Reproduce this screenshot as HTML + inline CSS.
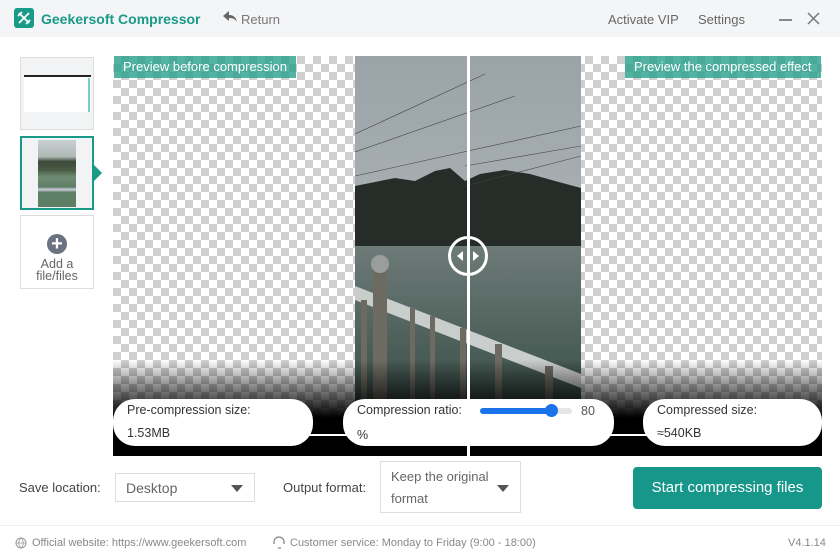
<!DOCTYPE html>
<html><head><meta charset="utf-8"><style>
*{margin:0;padding:0;box-sizing:border-box}
body{width:840px;height:560px;position:relative;background:#fff;font-family:"Liberation Sans",sans-serif;overflow:hidden;color:#333}
.abs{position:absolute}
.hdr{left:0;top:0;width:840px;height:37px;background:#f4f5f7}
.chk{background-color:#fff;background-image:linear-gradient(45deg,#cfcfcf 25%,transparent 25%,transparent 75%,#cfcfcf 75%),linear-gradient(45deg,#cfcfcf 25%,transparent 25%,transparent 75%,#cfcfcf 75%);background-size:16px 16px;background-position:0 0,8px 8px}
.lbl{background:rgba(40,160,140,.8);color:#fff;font-size:13px;height:22px;line-height:22px;padding:0 9px}
.pill{background:#fff;border-radius:22px;height:47px;top:399px;font-size:12.5px;color:#333}
.sel{border:1px solid #ddd;background:#fff;font-size:14px;color:#666}
.tri{width:0;height:0;border-left:6px solid transparent;border-right:6px solid transparent;border-top:7px solid #555}
</style></head><body>
<div class="abs hdr"></div>
<div class="abs" style="left:14px;top:8px;width:20px;height:20px;background:#1a9a88;border-radius:3px">
<svg width="20" height="20" viewBox="0 0 20 20"><path d="M5 5L15 15M15 5L5 15M8 4L4 8M16 12L12 16" stroke="#fff" stroke-width="1.8" fill="none"/></svg></div>
<div class="abs" style="left:41px;top:11px;font-size:14px;font-weight:bold;color:#1a9a88">Geekersoft Compressor</div>
<svg class="abs" style="left:223px;top:11px" width="14" height="12" viewBox="0 0 14 12"><path d="M6 0L0 5L6 10V7C10 7 12 8 14 11C13 6 10 4 6 4Z" fill="#666"/></svg>
<div class="abs" style="left:241px;top:12px;font-size:13px;color:#777">Return</div>
<div class="abs" style="left:608px;top:12px;font-size:13px;color:#666">Activate VIP</div>
<div class="abs" style="left:698px;top:12px;font-size:13px;color:#666">Settings</div>
<div class="abs" style="left:779px;top:19px;width:13px;height:1.5px;background:#888"></div>
<svg class="abs" style="left:807px;top:12px" width="13" height="13"><path d="M1 1L12 12M12 1L1 12" stroke="#777" stroke-width="1.5"/></svg>

<div class="abs" style="left:20px;top:57px;width:74px;height:73px;border:1px solid #ddd;background:#f2f3f5">
<div class="abs" style="left:3px;top:17px;width:67px;height:37px;background:#fff;border-top:2px solid #222"></div>
<div class="abs" style="left:67px;top:20px;width:2px;height:34px;background:#7cc"></div></div>
<div class="abs" style="left:20px;top:136px;width:74px;height:74px;border:2px solid #1a9a88;background:#f2f3f5">
<div class="abs" style="left:16px;top:2px;width:38px;height:67px;background:linear-gradient(#c8d0d4 0%,#b0b8b4 25%,#3d4a3c 32%,#4a5c45 45%,#6f8d74 55%,#5d7f66 70%,#ccd 74%,#5d7f66 78%)"></div></div>
<div class="abs" style="left:94px;top:165px;width:0;height:0;border-top:8px solid transparent;border-bottom:8px solid transparent;border-left:8px solid #1a9a88"></div>
<div class="abs" style="left:20px;top:215px;width:74px;height:74px;border:1px solid #ddd;background:#fff;text-align:center;font-size:12.5px;color:#666;line-height:12px">
<div style="width:20px;height:20px;border-radius:50%;background:#6b7280;margin:18px auto 4px;color:#fff;font-size:20px;line-height:20px;font-weight:bold">+</div>Add a<br>file/files</div>

<div class="abs chk" style="left:113px;top:56px;width:709px;height:400px"></div>
<svg class="abs" style="left:355px;top:56px" width="226" height="345" viewBox="0 0 226 345">
<defs><linearGradient id="sky" x1="0" y1="0" x2="0" y2="1"><stop offset="0" stop-color="#9aa3a8"/><stop offset="1" stop-color="#b9bfc0"/></linearGradient>
<linearGradient id="w" x1="0" y1="0" x2="0" y2="1"><stop offset="0" stop-color="#6d7b78"/><stop offset="1" stop-color="#3b4f48"/></linearGradient></defs>
<rect width="226" height="345" fill="url(#sky)"/>
<path d="M0 130L40 122L60 125L80 115L95 112L110 125L125 118L150 114L175 118L200 125L226 132V195H0Z" fill="#262d28"/>
<rect y="190" width="226" height="155" fill="url(#w)"/>
<path d="M0 78L130 18M0 96L160 40M0 120L226 70M110 110L226 90M110 130L226 100" stroke="#444" stroke-width=".6"/>
<path d="M0 230L226 318V332L0 244Z" fill="#c9cdcc"/>
<g fill="#6d6a62"><rect x="6" y="244" width="6" height="110"/><rect x="18" y="212" width="14" height="140"/><rect x="55" y="252" width="5" height="100"/><rect x="75" y="260" width="5" height="95"/><rect x="105" y="272" width="6" height="80"/><rect x="140" y="288" width="7" height="60"/><rect x="190" y="310" width="8" height="40"/></g>
<circle cx="25" cy="208" r="9" fill="#9a9d9c"/>
</svg>
<div class="abs" style="left:113px;top:360px;width:709px;height:96px;background:linear-gradient(rgba(0,0,0,0),#000 60%)"></div>
<div class="abs" style="left:467px;top:56px;width:3px;height:400px;background:#fff"></div>
<div class="abs" style="left:448px;top:236px;width:40px;height:40px;border:3px solid #fff;border-radius:50%"></div>
<div class="abs" style="left:457px;top:251px;border-top:5px solid transparent;border-bottom:5px solid transparent;border-right:6px solid #fff"></div>
<div class="abs" style="left:473px;top:251px;border-top:5px solid transparent;border-bottom:5px solid transparent;border-left:6px solid #fff"></div>
<div class="abs lbl" style="left:114px;top:56px">Preview before compression</div>
<div class="abs lbl" style="left:625px;top:56px">Preview the compressed effect</div>
<div class="abs" style="left:300px;top:434px;width:360px;height:2px;background:#fff"></div>
<div class="abs pill" style="left:113px;width:200px"><div class="abs" style="left:14px;top:4px">Pre-compression size:</div><div class="abs" style="left:14px;top:27px">1.53MB</div></div>
<div class="abs pill" style="left:343px;width:271px"><div class="abs" style="left:14px;top:4px">Compression ratio:</div><div class="abs" style="left:14px;top:29px">%</div>
<div class="abs" style="left:137px;top:9px;width:92px;height:6px;border-radius:3px;background:#e5e5e5"></div>
<div class="abs" style="left:137px;top:9px;width:72px;height:6px;border-radius:3px;background:#1a73e8"></div>
<div class="abs" style="left:202px;top:5px;width:13px;height:13px;border-radius:50%;background:#1a73e8"></div>
<div class="abs" style="left:238px;top:5px;color:#555">80</div></div>
<div class="abs pill" style="left:643px;width:179px"><div class="abs" style="left:14px;top:4px">Compressed size:</div><div class="abs" style="left:14px;top:27px">≈540KB</div></div>

<div class="abs" style="left:19px;top:480px;font-size:13px;color:#444">Save location:</div>
<div class="abs sel" style="left:115px;top:473px;width:140px;height:29px"><div class="abs" style="left:10px;top:6px">Desktop</div><div class="abs tri" style="left:115px;top:11px"></div></div>
<div class="abs" style="left:283px;top:480px;font-size:13px;color:#444">Output format:</div>
<div class="abs sel" style="left:380px;top:461px;width:141px;height:52px;font-size:13px;line-height:22px"><div class="abs" style="left:10px;top:4px">Keep the original<br>format</div><div class="abs tri" style="left:116px;top:23px"></div></div>
<div class="abs" style="left:633px;top:467px;width:189px;height:42px;background:#17978a;border-radius:4px;color:#fff;font-size:15px;text-align:center;line-height:42px">Start compressing files</div>

<div class="abs" style="left:0;top:525px;width:840px;height:1px;background:#eee"></div>
<svg class="abs" style="left:15px;top:537px" width="12" height="12"><circle cx="6" cy="6" r="5" stroke="#999" fill="none"/><path d="M1 6H11M6 1C3 4 3 8 6 11M6 1C9 4 9 8 6 11" stroke="#999" fill="none" stroke-width=".8"/></svg>
<div class="abs" style="left:32px;top:537px;font-size:11px;color:#888">Official website: https://www.geekersoft.com</div>
<svg class="abs" style="left:272px;top:536px" width="14" height="13"><path d="M2 8V6A5 5 0 0 1 12 6V8M9 12H6" stroke="#888" fill="none" stroke-width="1.3"/></svg>
<div class="abs" style="left:290px;top:537px;font-size:11px;color:#888">Customer service: Monday to Friday (9:00 - 18:00)</div>
<div class="abs" style="left:788px;top:537px;font-size:11px;color:#888">V4.1.14</div>
</body></html>
